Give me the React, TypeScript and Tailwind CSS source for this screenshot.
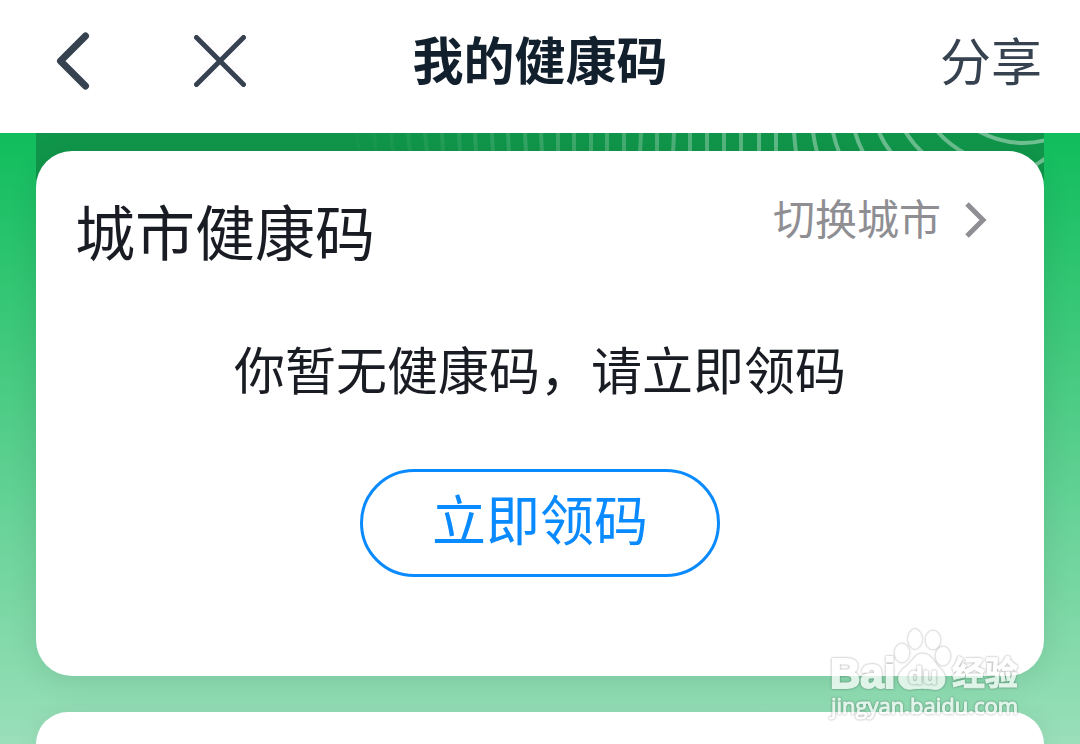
import type { ReactNode } from "react";

// top x / bottom x of every ripple that crosses the banner strip
const ripples = [
  [357, 359], [374, 376], [391, 393], [408, 410], [425, 427], [442, 443],
  [459, 460], [475, 476], [492, 493], [508, 509], [525, 526], [541, 542],
  [558, 558], [574, 574], [591, 591], [607, 607], [624, 624], [641, 640],
  [657, 657], [674, 673], [690, 690], [707, 707], [724, 724], [741, 741],
  [759, 759], [776, 776], [794, 796], [813, 817], [833, 839], [855, 863],
  [879, 891],
];

function BannerArt() {
  return (
    <svg
      className="absolute right-0 top-0 h-12 w-[1008px]"
      viewBox="36 133 1008 48"
      fill="none"
      stroke="#fff"
      strokeWidth={4}
      aria-hidden="true"
    >
      {ripples.map(([top, bottom], i) => (
        <path
          key={i}
          d={`M${top} 132 Q${(top + bottom) / 2 - (bottom - top) / 8} 143 ${bottom} 152`}
          strokeOpacity={Math.min(0.38, 0.02 + i * 0.0125)}
        />
      ))}
      <path d="M905 131 Q912 143 923 153" strokeOpacity={0.38} />
      <path d="M937 131 Q948 144 966 154" strokeOpacity={0.38} />
      <path d="M978 131 Q1012 149 1046 140" strokeOpacity={0.4} />
      <path d="M1030 167 Q1039 164 1046 158" strokeOpacity={0.4} />
    </svg>
  );
}

function Card({ children, className = "" }: { children?: ReactNode; className?: string }) {
  return (
    <section className={`relative bg-white shadow-[0_6px_30px_rgba(0,0,0,0.09)] ${className}`}>
      {children}
    </section>
  );
}

function Watermark() {
  const outline = "drop-shadow-[0_0_1px_rgba(0,0,0,0.5)]";

  return (
    <svg
      className="pointer-events-none absolute bottom-4 right-[50px] h-[104px] w-[204px] opacity-75"
      viewBox="0 0 204 104"
      fill="#fff"
      stroke="#fff"
      role="img"
      aria-label="Baidu 经验"
    >
      <g className={outline}>
        <ellipse cx="76" cy="29" rx="7" ry="9" />
        <ellipse cx="89" cy="15" rx="6.500" ry="9.500" />
        <ellipse cx="107" cy="16" rx="7" ry="9" />
        <ellipse cx="117" cy="32" rx="7" ry="9" />
        <path d="M96 30 C89 30 87 38 80 43 C73 48 72 53 73 57 C75 64 81 66 86 65 C93 64 100 64 106 65 C114 67 119 62 119 55 C119 48 113 45 109 39 C105 33 102 30 96 30 Z" />
      </g>
      <text x="4" y="64" strokeWidth={2} className={`${outline} font-['Liberation_Sans',sans-serif] text-[42px] font-bold`}>
        Bai
      </text>
      <text x="82" y="60" className={`${outline} font-['Liberation_Sans',sans-serif] text-[24px] font-bold`}>
        du
      </text>
      <text x="126" y="61" strokeWidth={1} className={`${outline} font-['Noto_Sans_CJK_SC',sans-serif] text-[33px] font-bold`}>
        经验
      </text>
      <text x="5" y="90" strokeWidth={1} className={`${outline} font-['Open_Sans',sans-serif] text-[22px]`}>
        jingyan.baidu.com
      </text>
    </svg>
  );
}

export default function App() {
  return (
    <div className="relative flex min-h-screen flex-col overflow-hidden bg-white font-['Noto_Sans_CJK_SC',sans-serif] text-[#1a1c24]">
      {/* nav bar */}
      <header className="grid h-[133px] grid-cols-[1fr_auto_1fr] items-center bg-white px-[38px] pb-3 text-[#36424f]">
        <div className="flex items-center gap-[102px] pl-[18px]">
          <button type="button" aria-label="返回">
            <svg className="h-[58px] w-9" viewBox="0 0 36 58" fill="none" stroke="currentColor" strokeWidth={7} strokeLinecap="round" strokeLinejoin="round">
              <path d="M29.500 4 L4.500 29 L29.500 54" />
            </svg>
          </button>
          <button type="button" aria-label="关闭">
            <svg className="size-[52px]" viewBox="0 0 52 52" fill="none" stroke="currentColor" strokeWidth={5} strokeLinecap="round">
              <path d="M2.500 2.500 L49.500 49.500 M49.500 2.500 L2.500 49.500" />
            </svg>
          </button>
        </div>
        <h1 className="pb-1 text-[51px] font-bold leading-none text-[#12202e]">我的健康码</h1>
        <button type="button" className="justify-self-end pb-0.5 text-[51px] leading-none">
          分享
        </button>
      </header>

      <main className="relative flex flex-1 flex-col gap-9 bg-linear-to-b/srgb from-[#10bd5c] to-[#9adfba] px-9 pt-[18px]">
        <div className="absolute inset-x-9 top-0 h-12 overflow-hidden bg-[#10964a]">
          <BannerArt />
        </div>

        <Card className="flex flex-col rounded-[36px] pb-[99px]">
          <div className="flex items-start justify-between pl-[39px] pr-[57px] pt-[43px]">
            <h2 className="text-[60px] leading-[72px]">城市健康码</h2>
            <button type="button" className="flex items-center gap-6 pt-0.5 text-[42px] leading-[42px] text-[#8e8e93]">
              <span className="pb-1.5">切换城市</span>
              <svg className="h-9 w-[22px]" viewBox="0 0 22 36" fill="none" stroke="currentColor" strokeWidth={5}>
                <path d="M2 2 L18 18 L2 34" />
              </svg>
            </button>
          </div>
          <p className="mt-[72px] text-center text-[51px] leading-[60px]">你暂无健康码，请立即领码</p>
          <button
            type="button"
            className="mt-[71px] h-[108px] w-[360px] self-center rounded-full border-[3px] border-[#0a8aff] pb-2.5 text-[54px] leading-none text-[#0a8aff]"
          >
            立即领码
          </button>
        </Card>

        <Card className="min-h-8 flex-1 rounded-t-[36px]" />
      </main>

      <Watermark />
    </div>
  );
}
